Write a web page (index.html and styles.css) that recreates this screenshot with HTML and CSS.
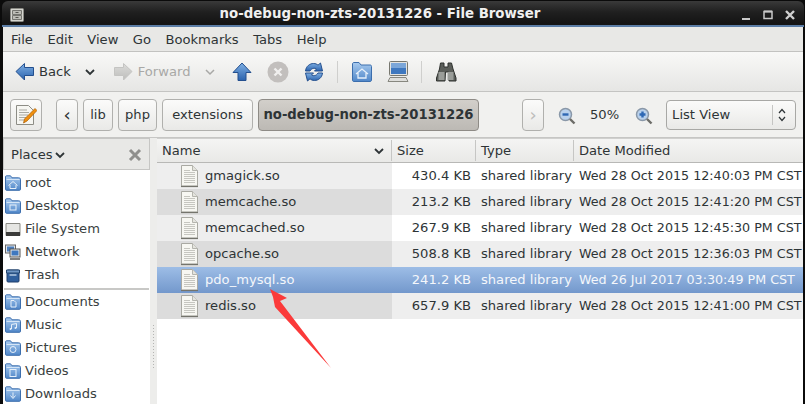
FILE: index.html
```html
<!DOCTYPE html>
<html lang="en">
<head>
<meta charset="utf-8">
<title>no-debug-non-zts-20131226 - File Browser</title>
<link rel="stylesheet" href="styles.css">
</head>
<body>
<svg class="defs" width="0" height="0" aria-hidden="true">
  <defs>
    <linearGradient id="bl" x1="0" y1="0" x2="0" y2="1"><stop offset="0" stop-color="#7fb0e4"/><stop offset="1" stop-color="#2a62ad"/></linearGradient>
    <linearGradient id="fold" x1="0" y1="0" x2="0" y2="1"><stop offset="0" stop-color="#a9cbef"/><stop offset="1" stop-color="#4f86c8"/></linearGradient>
    <linearGradient id="grey" x1="0" y1="0" x2="0" y2="1"><stop offset="0" stop-color="#dcdcda"/><stop offset="1" stop-color="#bdbdbb"/></linearGradient>
    <symbol id="doc" viewBox="0 0 20 24">
      <path d="M1.500 1.500h11l5 5v15.500h-16z" fill="#f7f7f2" stroke="#a9a9a2"/>
      <path d="M1 22.500h17" stroke="#74746c" stroke-width="1.200"/>
      <path d="M12.500 1.500v5h5" fill="#e4e4de" stroke="#b5b5ae"/>
      <path d="M4 6.500h6M4 8.500h11M4 10.500h11M4 12.500h11M4 14.500h11M4 16.500h11M4 18.500h11" stroke="#c6c6c0"/>
    </symbol>
    <symbol id="folder" viewBox="0 0 16 16">
      <path d="M.5 3V1.800C.5 1 1 .8 1.500.8h4l1.500 2h6.500c1 0 2 .5 2 1.500v10c0 .7-.5 1-1 1h-13c-.5 0-1-.3-1-1z" fill="url(#fold)" stroke="#3c6ead"/>
      <path d="M1.500 4.500h13" stroke="#d5e5f6"/>
    </symbol>
  </defs>
</svg>
<div class="window">
  <header class="titlebar">
    <svg class="cabinet" viewBox="0 0 14 14" width="14" height="14"><rect x=".5" y=".5" width="13" height="13" rx="1" fill="#d5d5cf" stroke="#8a8a84"/><path d="M2.500 2.500h9v4h-9zM2.500 7.500h9v4h-9z" fill="#bcbcb5" stroke="#75756f"/><path d="M5.500 4.500h3M5.500 9.500h3" stroke="#55554f"/></svg>
    <span class="title">no-debug-non-zts-20131226 - File Browser</span>
    <div class="wm">
      <svg viewBox="0 0 12 12" width="12" height="12"><path d="M2 10h8" stroke="#c8c8c8" stroke-width="2"/></svg>
      <svg viewBox="0 0 12 12" width="12" height="12"><path d="M2 2.500h8v7h-8z" fill="none" stroke="#c8c8c8" stroke-width="1.500"/><path d="M2 2.500h8" stroke="#c8c8c8" stroke-width="2"/></svg>
      <svg viewBox="0 0 12 12" width="12" height="12"><path d="M2 2l8 8M10 2l-8 8" stroke="#d0d0d0" stroke-width="2.400"/></svg>
    </div>
  </header>

  <nav class="menubar">
    <span>File</span><span>Edit</span><span>View</span><span>Go</span><span>Bookmarks</span><span>Tabs</span><span>Help</span>
  </nav>

  <div class="toolbar">
    <svg class="ic-back" viewBox="0 0 20 20" width="20" height="20"><path d="M9.500 1.500L1 9.500l8.500 8.500v-4.500h9v-8h-9z" fill="url(#bl)" stroke="#234f8e"/></svg>
    <span class="tb-label">Back</span>
    <svg class="chev" viewBox="0 0 12 8" width="12" height="8"><path d="M2 2l4 4 4-4" fill="none" stroke="#2e3436" stroke-width="1.800"/></svg>
    <svg class="ic-fwd" viewBox="0 0 20 20" width="20" height="20"><path d="M10.500 1.500L19 9.500l-8.500 8.500v-4.500h-9v-8h9z" fill="url(#grey)" stroke="#c4c4c2"/></svg>
    <span class="tb-label lbl-f dim">Forward</span>
    <svg class="chev dimchev" viewBox="0 0 12 8" width="12" height="8"><path d="M2 2l4 4 4-4" fill="none" stroke="#a8a8a6" stroke-width="1.500"/></svg>
    <svg class="ic-up" viewBox="0 0 20 20" width="20" height="20"><path d="M10 1L1 10.500h5V18.500h8V10.500h5z" fill="url(#bl)" stroke="#234f8e"/></svg>
    <svg class="ic-stop" viewBox="0 0 22 22" width="22" height="22"><circle cx="11" cy="11" r="10.500" fill="#c2bfbd"/><path d="M7.500 7.500l7 7M14.500 7.500l-7 7" stroke="#f0efee" stroke-width="2.400"/></svg>
    <svg class="ic-reload" viewBox="0 0 20 20" width="20" height="20"><path d="M1.500 9C2 4 6 1.500 9.500 1.500c2 0 3.500.7 4.500 1.700L16.500 1 18.500 9h-8l2-2C11 5.800 7.500 6 6 9z" fill="url(#bl)" stroke="#234f8e"/><path d="M18.500 11c-.5 5-4.500 7.500-8 7.500-2 0-3.500-.7-4.500-1.700L3.500 19 1.500 11h8l-2 2c1.500 1.200 5 1 6.500-2z" fill="url(#bl)" stroke="#234f8e"/></svg>
    <i class="sep"></i>
    <svg class="ic-home" viewBox="0 0 20 20" width="20" height="20"><path d="M.5 4V2c0-.8.500-1.500 1.500-1.500h5L9 3h9c1 0 1.500.5 1.500 1.500V18c0 .8-.5 1.500-1.500 1.500H2C1 19.500.5 19 .5 18z" fill="url(#fold)" stroke="#3c6ead"/><path d="M4 12l6-5 6 5M6 11v5h8v-5" fill="none" stroke="#e6f0fa" stroke-width="1.300"/></svg>
    <svg class="ic-pc" viewBox="0 0 22 22" width="22" height="22"><rect x="2.500" y=".5" width="18" height="14" rx="1" fill="#e3e3e0" stroke="#77776f"/><rect x="4" y="2" width="15" height="11" fill="#3f78bf"/><path d="M4 2h15v5H4z" fill="#7ba6d8"/><path d="M1 20.500l2-4h16l2 4z" fill="#dededb" stroke="#87877f"/></svg>
    <i class="sep sep2"></i>
    <svg class="ic-bino" viewBox="0 0 22 22" width="22" height="22"><path d="M5.500 2h3.500v4h4V2h3.500l1.500 6 3 9v3h-7l-.5-9h-3l-.5 9H1.500v-3l3-9z" fill="#5b5e5a" stroke="#2e312e"/><rect x="3.500" y="11" width="6" height="8" fill="#9a9d99"/><rect x="12.500" y="11" width="6" height="8" fill="#9a9d99"/></svg>
  </div>

  <div class="pathbar">
    <button class="btn edit">
      <svg viewBox="0 0 22 22" width="22" height="22"><path d="M1.500 1.500h12l5 5v14h-17z" fill="#f6f6f2" stroke="#8d8d86"/><path d="M4 6h8M4 8.500h10M4 11h9M4 13.500h7M4 16h6" stroke="#a9a9a2"/><path d="M8.500 19l1-4L20 4.500l2 2L12 17z" fill="#f0900f" stroke="#a85a05" stroke-width=".7"/></svg>
    </button>
    <button class="btn back">‹</button>
    <button class="btn crumb">lib</button>
    <button class="btn crumb">php</button>
    <button class="btn crumb wide">extensions</button>
    <button class="btn current">no-debug-non-zts-20131226</button>
    <button class="btn next">›</button>
    <svg class="zoom zoom-out" viewBox="0 0 18 18" width="18" height="18"><circle cx="7.500" cy="7.500" r="6" fill="#b9d1ec" stroke="#8a98a8" stroke-width="1.500"/><path d="M4.500 7.500h6" stroke="#2e68b4" stroke-width="2.400"/><path d="M12 12l4.500 4.500" stroke="#6d6d68" stroke-width="2.400"/></svg>
    <span class="pct">50%</span>
    <svg class="zoom zoom-in" viewBox="0 0 18 18" width="18" height="18"><circle cx="7.500" cy="7.500" r="6" fill="#b9d1ec" stroke="#8a98a8" stroke-width="1.500"/><path d="M4.500 7.500h6M7.500 4.500v6" stroke="#2e68b4" stroke-width="2.400"/><path d="M12 12l4.500 4.500" stroke="#6d6d68" stroke-width="2.400"/></svg>
    <div class="select"><span class="sel-text">List View</span><i class="sel-sep"></i>
      <svg viewBox="0 0 10 16" width="10" height="16"><path d="M2 6l3-3.500L8 6M2 10l3 3.500L8 10" fill="none" stroke="#2e3436" stroke-width="1.200"/></svg>
    </div>
  </div>

  <main class="panes">
    <aside class="sidebar">
      <div class="places-head">
        <span class="places-title">Places</span>
        <svg class="chev-p" viewBox="0 0 12 8" width="12" height="8"><path d="M2 2l4 4 4-4" fill="none" stroke="#2e3436" stroke-width="1.800"/></svg>
        <svg class="close" viewBox="0 0 14 14" width="14" height="14"><path d="M2 2l10 10M12 2L2 12" stroke="#8f8f8d" stroke-width="3"/></svg>
      </div>
      <ul class="places">
        <li><svg class="pi" width="16" height="16"><use href="#folder"/><path d="M3.500 10.500l4.500-4 4.500 4M5 10v3.500h6V10" fill="none" stroke="#e6f0fa"/></svg>root</li>
        <li><svg class="pi" width="16" height="16"><use href="#folder"/><rect x="5" y="7" width="6" height="5" fill="none" stroke="#e6f0fa"/></svg>Desktop</li>
        <li><svg class="pi" width="16" height="16" viewBox="0 0 16 16"><path d="M1 2.500h14v12H1z" fill="#e6e6e3" stroke="#8a8a84"/><path d="M1 11h14v4H1z" fill="#3c3c3a"/></svg>File System</li>
        <li><svg class="pi" width="16" height="16" viewBox="0 0 16 16"><rect x=".5" y="1" width="10" height="8" fill="#dfe4ea" stroke="#666"/><rect x="2" y="2.500" width="7" height="5" fill="#4a7fc0"/><rect x="5" y="5" width="10" height="8" fill="#e8e8e6" stroke="#555"/><rect x="6.500" y="6.500" width="7" height="5" fill="#3f78bf"/><path d="M5 15h10" stroke="#555" stroke-width="1.500"/></svg>Network</li>
        <li><svg class="pi" width="16" height="16" viewBox="0 0 16 16"><rect x="2" y="3" width="12" height="12" rx="1" fill="#2f5f9c" stroke="#1f3f6c"/><path d="M1.500 3h13v3h-13z" fill="#6f97c6" stroke="#24466f"/><path d="M4.500 8h7" stroke="#d8e4f2" stroke-width="1.200"/></svg>Trash</li>
      </ul>
      <hr class="rule">
      <ul class="places">
        <li><svg class="pi" width="16" height="16"><use href="#folder"/><path d="M6 6.500h3l2 2v4.500H6z" fill="none" stroke="#e6f0fa"/></svg>Documents</li>
        <li><svg class="pi" width="16" height="16"><use href="#folder"/><path d="M6.500 12V7.500l5-1V11" fill="none" stroke="#e6f0fa"/><circle cx="5.500" cy="12" r="1" fill="#e6f0fa"/><circle cx="10.500" cy="11" r="1" fill="#e6f0fa"/></svg>Music</li>
        <li><svg class="pi" width="16" height="16"><use href="#folder"/><circle cx="8" cy="9.500" r="3" fill="none" stroke="#e6f0fa"/></svg>Pictures</li>
        <li><svg class="pi" width="16" height="16"><use href="#folder"/><rect x="5" y="6.500" width="6" height="7" fill="none" stroke="#e6f0fa"/></svg>Videos</li>
        <li><svg class="pi" width="16" height="16"><use href="#folder"/><path d="M8 6.500v5M5.500 9.500L8 12.500l2.500-3" fill="none" stroke="#e6f0fa"/></svg>Downloads</li>
      </ul>
    </aside>
    <div class="splitter"><i class="grip"></i></div>
    <section class="list">
      <div class="row head">
        <div class="c name">Name<svg class="sort" viewBox="0 0 12 8" width="12" height="8"><path d="M2 2l4 4 4-4" fill="none" stroke="#2e3436" stroke-width="1.800"/></svg></div>
        <div class="c size">Size</div>
        <div class="c type">Type</div>
        <div class="c date">Date Modified</div>
      </div>
      <div class="row"><div class="c name"><svg class="doc"><use href="#doc"/></svg>gmagick.so</div><div class="c size">430.4 KB</div><div class="c type">shared library</div><div class="c date">Wed 28 Oct 2015 12:40:03 PM CST</div></div>
      <div class="row alt"><div class="c name"><svg class="doc"><use href="#doc"/></svg>memcache.so</div><div class="c size">213.2 KB</div><div class="c type">shared library</div><div class="c date">Wed 28 Oct 2015 12:41:20 PM CST</div></div>
      <div class="row"><div class="c name"><svg class="doc"><use href="#doc"/></svg>memcached.so</div><div class="c size">267.9 KB</div><div class="c type">shared library</div><div class="c date">Wed 28 Oct 2015 12:45:30 PM CST</div></div>
      <div class="row alt"><div class="c name"><svg class="doc"><use href="#doc"/></svg>opcache.so</div><div class="c size">508.8 KB</div><div class="c type">shared library</div><div class="c date">Wed 28 Oct 2015 12:36:03 PM CST</div></div>
      <div class="row selected"><div class="c name"><svg class="doc"><use href="#doc"/></svg>pdo_mysql.so</div><div class="c size">241.2 KB</div><div class="c type">shared library</div><div class="c date">Wed 26 Jul 2017 03:30:49 PM CST</div></div>
      <div class="row alt"><div class="c name"><svg class="doc"><use href="#doc"/></svg>redis.so</div><div class="c size">657.9 KB</div><div class="c type">shared library</div><div class="c date">Wed 28 Oct 2015 12:41:00 PM CST</div></div>
    </section>
  </main>
  <svg class="annot" viewBox="0 0 805 404" width="805" height="404" aria-hidden="true"><path d="M270 289L287 298L280 301L331 368L275 307L273 297z" fill="#fb3a3a"/></svg>
</div>
</body>
</html>
```
FILE: styles.css
```css
* { box-sizing: border-box; }
html, body { margin: 0; padding: 0; }
body { width: 805px; height: 404px; overflow: hidden; background: #000; font: 13.1px/18px "DejaVu Sans", sans-serif; color: #2e3436; }
.defs { position: absolute; }
.window { position: relative; width: 805px; height: 404px; padding: 0 2px 0 3px; background: #0b0b0b; overflow: hidden; }
svg { display: block; flex: none; }

.titlebar { height: 26px; margin: 1px -1px 0 -1px; padding: 5px 8px 0 8px; display: flex; align-items: flex-start; position: relative; border-radius: 6px 6px 0 0; background: linear-gradient(#3a3a3a, #202020 45%, #141414 92%); border-bottom: 2px solid #5b7da6; }
.cabinet { margin-top: 2px; width: 14px; height: 14px; }
.title { position: absolute; left: 0; right: 46px; top: 4px; text-align: center; color: #f0f0f0; font-weight: 700; font-size: 13.33px; }
.wm { margin-left: auto; display: flex; gap: 10px; margin-top: 3px; }

.menubar { height: 25px; display: flex; align-items: center; gap: 14.5px; padding: 2px 0 0 8px; background: #e8e8e6; border-bottom: 1px solid #c2c2c0; }

.toolbar { height: 40px; display: flex; align-items: center; padding: 0 0 0 12px; background: linear-gradient(#f8f8f7, #e6e6e4); border-bottom: 1px solid #c4c4c2; }
.tb-label { margin-left: 4px; }
.lbl-f { margin-left: 5px; }
.dim { color: #a8a8a6; }
.chev { margin-left: 13px; }
.ic-fwd { margin-left: 17px; }
.dimchev { margin-left: 14px; }
.ic-up { margin-left: 16px; }
.ic-stop { margin-left: 15px; }
.ic-reload { margin-left: 15px; }
.sep { width: 1px; height: 22px; margin-left: 13px; background: #cfcfcd; }
.ic-home { margin-left: 14px; }
.ic-pc { margin-left: 15px; }
.sep2 { margin-left: 12px; }
.ic-bino { margin-left: 13px; }

.pathbar { height: 46px; display: flex; align-items: center; padding: 1px 0 0 7px; background: #f1f1ef; border-bottom: 1px solid #c6c6c4; }
.btn { height: 32px; padding: 0; border: 1px solid #b0b0ad; border-radius: 4px; background: linear-gradient(#fbfbfa, #e9e9e7); font: inherit; color: #2e3436; white-space: nowrap; }
.edit { width: 32px; display: flex; align-items: center; justify-content: center; }
.back { width: 22px; margin-left: 14px; font-size: 18px; }
.crumb { width: 30px; margin-left: 5px; }
.crumb + .crumb { width: 39px; }
.crumb.wide { width: 91px; }
.current { width: 221px; margin-left: 5px; background: linear-gradient(#d2cfca, #bcb9b4); border-color: #8e8b86; font-weight: 700; font-size: 13.2px; }
.next { width: 22px; margin-left: 43px; color: #bdbdbb; font-size: 18px; }
.zoom-out { margin-left: 14px; margin-top: 1px; }
.pct { margin-left: 14px; }
.zoom-in { margin-left: 16px; margin-top: 1px; }
.select { width: 130px; height: 30px; margin-left: 13px; display: flex; align-items: center; padding: 0 8px 0 5px; border: 1px solid #a8a8a5; border-radius: 4px; background: linear-gradient(#fbfbfa, #e9e9e7); }
.sel-text { flex: 1; }
.sel-sep { width: 1px; height: 20px; margin-right: 4px; background: #c5c5c3; }

.panes { height: 266px; display: flex; background: #fff; }
.sidebar { width: 147px; flex: none; background: #fff; }
.places-head { height: 32px; display: flex; align-items: center; padding: 2px 7px 0 7px; background: #e8e8e6; border: 1px solid #c6c6c4; }
.chev-p { margin-left: 1px; }
.close { margin-left: auto; }
.places { list-style: none; margin: 0; padding: 0; }
.places:first-of-type { padding-top: 1px; }
.places li { height: 23px; display: flex; align-items: center; gap: 4px; padding-left: 2px; color: #3a3f41; }
.pi { width: 16px; height: 16px; }
.rule { margin: 2px 1px 0 1px; border: 0; border-top: 2px solid #c8c8c6; }
.splitter { width: 7px; flex: none; background: #ededeb; display: flex; align-items: center; justify-content: center; }
.grip { display: block; width: 3px; height: 46px; margin-top: 152px; background-image: radial-gradient(#b4b4b2 40%, transparent 45%); background-size: 3px 3px; }

.list { flex: 1; min-width: 0; overflow: hidden; }
.row { height: 26px; display: flex; background: #fff; }
.row .c { display: flex; align-items: center; flex: none; white-space: nowrap; }
.name { width: 235px; background: #eeeeee; padding-left: 23px; }
.size { width: 84px; justify-content: flex-end; padding-right: 5px; }
.type { width: 98px; padding-left: 5px; }
.date { width: 229px; padding-left: 5px; font-size: 12.7px; }
.doc { width: 20px; height: 24px; margin-right: 5px; }
.row.alt { background: #eeeeee; }
.row.alt .name { background: #dcdcdc; }
.row.selected { background: linear-gradient(#9dbde6, #7398cc); color: #f4f7fb; }
.row.selected .name { background: none; }
.row.head { height: 25px; background: linear-gradient(#f4f4f3, #e9e9e7); border-top: 1px solid #d0d0ce; border-bottom: 1px solid #b8b8b6; }
.row.head .c { background: none; padding-left: 5px; justify-content: flex-start; border-right: 1px solid #c6c6c4; margin: 1px 0; }
.row.head .date { border-right: 0; font-size: 13.1px; }
.sort { margin-left: auto; margin-right: 6px; }
.annot { position: absolute; left: 0; top: 0; pointer-events: none; }
```
